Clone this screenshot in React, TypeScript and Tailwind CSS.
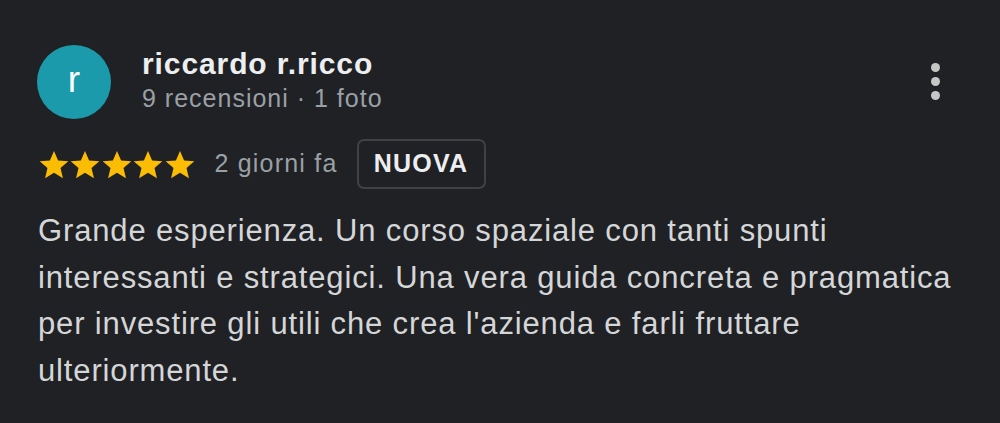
import React from "react";

const Star = () => (
  <svg viewBox="0 0 24 24" className="w-[34px] h-[34px] -mx-[1.25px]" fill="#fbbc04">
    <path d="M12 2.2l2.9 6.6 7.2.6-5.5 4.8 1.7 7.1L12 17.5l-6.3 3.8 1.7-7.1L1.9 9.4l7.2-.6z" />
  </svg>
);

export default function App() {
  return (
    <div
      className="w-[1000px] h-[423px] bg-[#202124] overflow-hidden text-[#e8eaed]"
      style={{ fontFamily: '"Liberation Sans", Arial, sans-serif' }}
    >
      <div className="pl-[37px] pr-[56px] pt-[45px]">
        {/* Header */}
        <div className="flex items-start">
          <div className="w-[74px] h-[74px] rounded-full bg-[#1a9aab] flex items-center justify-center text-white text-[37px] leading-none pb-[6px]">
            r
          </div>
          <div className="ml-[31px] flex-1 pt-[2px]">
            <div className="text-[30px] font-bold leading-[34px] tracking-[0.9px] text-[#eceef0]">riccardo r.ricco</div>
            <div className="text-[25px] leading-[32px] tracking-[1px] text-[#9aa0a6] mt-[1px]">9 recensioni · 1 foto</div>
          </div>
          <div className="flex flex-col items-center gap-[5px] mt-[18px] mr-[4px]">
            <span className="w-[9px] h-[9px] rounded-full bg-[#c4c7c5]" />
            <span className="w-[9px] h-[9px] rounded-full bg-[#c4c7c5]" />
            <span className="w-[9px] h-[9px] rounded-full bg-[#c4c7c5]" />
          </div>
        </div>

        {/* Rating row */}
        <div className="flex items-center mt-[20px]">
          <div className="flex items-center ml-[1px] mt-[1px]">
            <Star />
            <Star />
            <Star />
            <Star />
            <Star />
          </div>
          <span className="ml-[19px] text-[25px] tracking-[1.2px] text-[#9aa0a6]">2 giorni fa</span>
          <span className="ml-[19px] h-[50px] w-[129px] flex items-center justify-center border-2 border-[#3f4145] rounded-[7px] text-[25px] font-bold tracking-[1.2px] text-[#eceef0]">
            NUOVA
          </span>
        </div>

        {/* Body */}
        <p className="mt-[19px] ml-[1px] text-[31px] leading-[46.5px] tracking-[0.85px] text-[#d4d6d8] whitespace-nowrap">
          Grande esperienza. Un corso spaziale con tanti spunti
          <br />
          interessanti e strategici. Una vera guida concreta e pragmatica
          <br />
          per investire gli utili che crea l'azienda e farli fruttare
          <br />
          ulteriormente.
        </p>
      </div>
    </div>
  );
}
